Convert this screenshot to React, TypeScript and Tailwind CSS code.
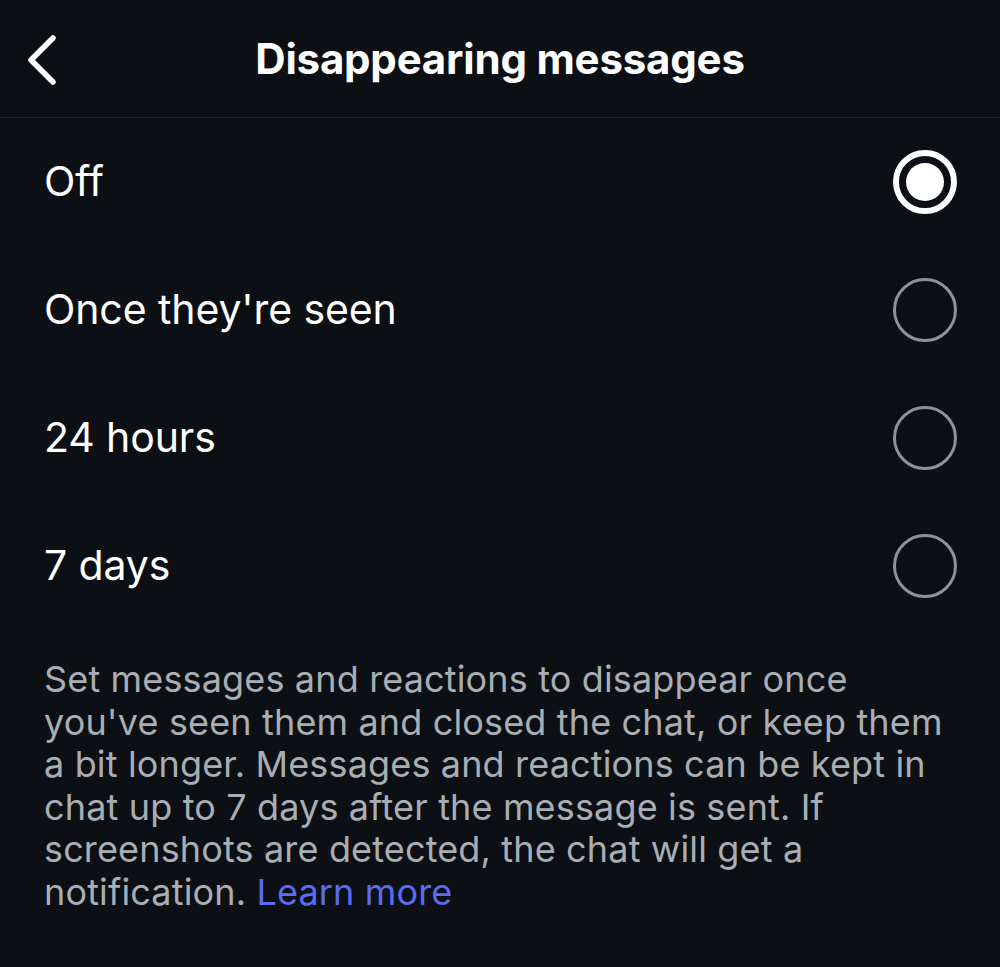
import React, { useState } from 'react';

// 选项列表
const options = ['Off', "Once they're seen", '24 hours', '7 days'];

// 说明文字（按原图换行）
const lines = [
  'Set messages and reactions to disappear once',
  "you've seen them and closed the chat, or keep them",
  'a bit longer. Messages and reactions can be kept in',
  'chat up to 7 days after the message is sent. If',
  'screenshots are detected, the chat will get a',
];

// 单选按钮
const Radio: React.FC<{ checked: boolean }> = ({ checked }) => {
  if (checked) {
    return (
      <div className="w-[64px] h-[64px] rounded-full border-[6px] border-white flex items-center justify-center">
        <div className="w-[38px] h-[38px] rounded-full bg-white" />
      </div>
    );
  }
  return <div className="w-[64px] h-[64px] rounded-full border-[3px] border-[#8e9296]" />;
};

export default function App() {
  const [selected, setSelected] = useState(0);

  return (
    <div
      className="w-[1000px] h-[967px] bg-[#0c1014] text-white overflow-hidden"
      style={{ fontFamily: 'Inter, "Noto Sans", sans-serif' }}
    >
      {/* 顶部栏 */}
      <div className="relative h-[118px] flex items-center justify-center border-b border-[#1c2229]">
        <button className="absolute left-[20px] top-[30px] w-[44px] h-[60px] flex items-center justify-center">
          <svg width="36" height="54" viewBox="0 0 36 54" fill="none">
            <path d="M29 5 L7 27 L29 49" stroke="white" strokeWidth="5.5" strokeLinecap="round" strokeLinejoin="round" />
          </svg>
        </button>
        <h1 className="text-[42px] font-bold tracking-[-0.2px]">Disappearing messages</h1>
      </div>

      {/* 选项 */}
      <div>
        {options.map((label, i) => (
          <div
            key={label}
            onClick={() => setSelected(i)}
            className="h-[128px] flex items-center justify-between pl-[44px] pr-[43px] cursor-pointer"
          >
            <span className="text-[41px] tracking-[-0.1px]">{label}</span>
            <Radio checked={selected === i} />
          </div>
        ))}
      </div>

      {/* 说明文字 */}
      <div className="mt-[28px] px-[44px] text-[36px] leading-[42.6px] text-[#a9aeb4] tracking-[0.15px]">
        {lines.map((l) => (
          <div key={l} className="whitespace-nowrap">{l}</div>
        ))}
        <div className="whitespace-nowrap">
          notification. <span className="text-[#5a6cf0]">Learn more</span>
        </div>
      </div>
    </div>
  );
}
